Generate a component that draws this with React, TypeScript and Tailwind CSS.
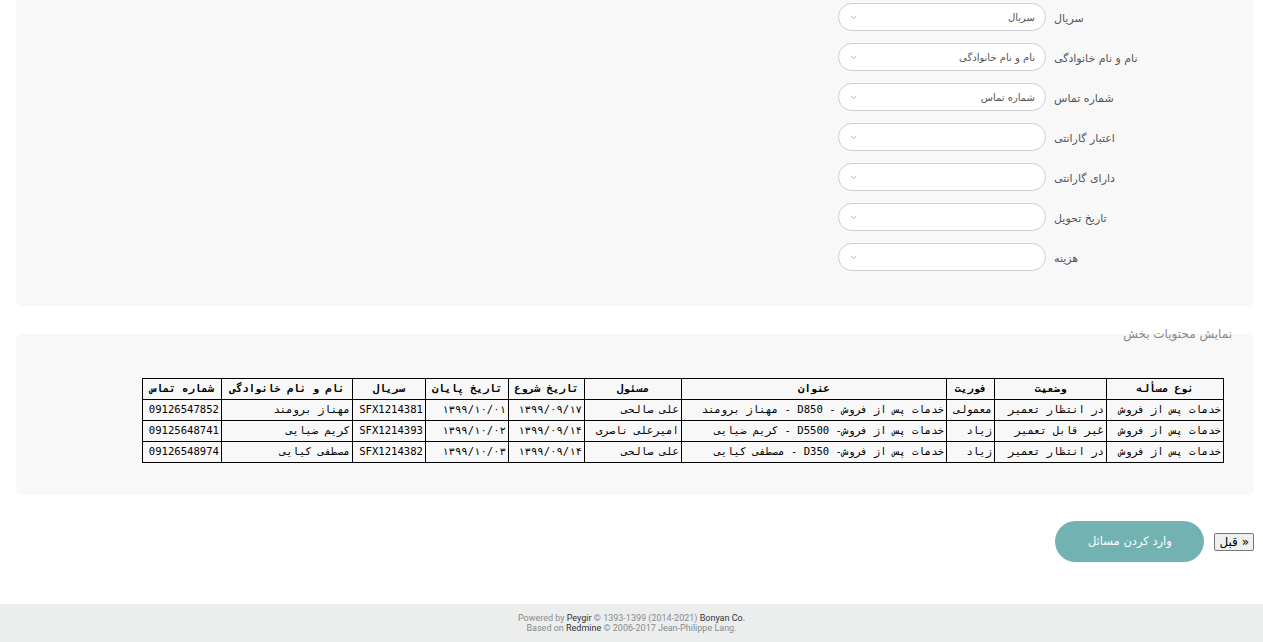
import { ChevronDown } from "lucide-react";

const fields = [
  { label: "سریال", placeholder: "سریال" },
  { label: "نام و نام خانوادگی", placeholder: "نام و نام خانوادگی" },
  { label: "شماره تماس", placeholder: "شماره تماس" },
  { label: "اعتبار گارانتی", placeholder: "" },
  { label: "دارای گارانتی", placeholder: "" },
  { label: "تاریخ تحویل", placeholder: "" },
  { label: "هزینه", placeholder: "" },
];

const headers = [
  { t: "نوع مسأله", w: "w-[117px]" },
  { t: "وضعیت", w: "w-[112px]" },
  { t: "فوریت", w: "w-[48px]" },
  { t: "عنوان", w: "w-[265px]" },
  { t: "مسئول", w: "w-[97px]" },
  { t: "تاریخ شروع", w: "w-[76px]" },
  { t: "تاریخ پایان", w: "w-[83px]" },
  { t: "سریال", w: "w-[73px]" },
  { t: "نام و نام خانوادگی", w: "w-[131px]" },
  { t: "شماره تماس", w: "w-[79px]" },
];

const rows = [
  ["خدمات پس از فروش", "در انتظار تعمیر", "معمولی", "خدمات پس از فروش - D850 - مهناز برومند", "علی صالحی", "۱۳۹۹/۰۹/۱۷", "۱۳۹۹/۱۰/۰۱", "SFX1214381", "مهناز برومند", "09126547852"],
  ["خدمات پس از فروش", "غیر قابل تعمیر", "زیاد", "خدمات پس از فروش- D5500 - کریم ضیایی", "امیرعلی ناصری", "۱۳۹۹/۰۹/۱۴", "۱۳۹۹/۱۰/۰۲", "SFX1214393", "کریم ضیایی", "09125648741"],
  ["خدمات پس از فروش", "در انتظار تعمیر", "زیاد", "خدمات پس از فروش- D350 - مصطفی کیایی", "علی صالحی", "۱۳۹۹/۰۹/۱۴", "۱۳۹۹/۱۰/۰۳", "SFX1214382", "مصطفی کیایی", "09126548974"],
];

const SelectBox = ({ placeholder }: { placeholder: string }) => (
  <div className="w-[208px] h-7 rounded-full border border-[#cfcfcf] bg-white flex items-center justify-between pl-[10px] pr-[10px]">
    <ChevronDown size={9} strokeWidth={2} className="text-[#9a9a9a]" />
    <span dir="rtl" className="text-[10px] text-[#555]">
      {placeholder}
    </span>
  </div>
);

export default function App() {
  return (
    <div className="min-h-[642px] bg-white flex flex-col font-['DejaVu_Sans',sans-serif]">
      <div className="ml-4 mr-[9px] bg-[#f8f8f8] rounded-b-md pt-[3px] pb-[35px] flex flex-col gap-3">
        {fields.map((f) => (
          <div key={f.label} className="flex justify-end items-center gap-2">
            <SelectBox placeholder={f.placeholder} />
            <div className="w-[200px]">
              <span dir="rtl" className="text-[11px] text-[#555]">
                {f.label}
              </span>
            </div>
          </div>
        ))}
      </div>

      <fieldset dir="rtl" className="ml-4 mr-[9px] mt-[21px] bg-[#f8f8f8] rounded-md pr-[22px] pb-[32px]">
        <legend className="text-[12px] text-[#888] leading-[14px]">نمایش محتویات بخش</legend>
        <table className="mt-[37px] mr-2 border-collapse text-[10.6px] text-black font-['DejaVu_Sans_Mono',monospace]">
          <thead>
            <tr>
              {headers.map((h) => (
                <th key={h.t} className={`${h.w} h-[21px] border border-black px-[2px] py-0 text-center font-bold whitespace-nowrap`}>
                  {h.t}
                </th>
              ))}
            </tr>
          </thead>
          <tbody>
            {rows.map((r, i) => (
              <tr key={i}>
                {r.map((c, j) => (
                  <td key={j} className="h-[21px] border border-black px-[2px] py-0 text-right whitespace-nowrap">
                    {c}
                  </td>
                ))}
              </tr>
            ))}
          </tbody>
        </table>
      </fieldset>

      <div className="mt-[26px] mr-[9px] flex justify-end items-center gap-[10px]">
        <button className="w-[149px] h-[41px] rounded-full bg-[#73b2b2] text-white text-[11.5px]">
          وارد کردن مسائل
        </button>
        <button dir="rtl" className="h-[18px] px-1 border border-[#767676] rounded-[2px] bg-[#efefef] text-[12px] text-black leading-none">
          « قبل
        </button>
      </div>

      <div className="mt-[42px] h-[38px] bg-[#eceeee] flex flex-col items-center justify-center text-[9px] leading-[10.5px] text-[#8a8a8a] font-['Roboto',sans-serif]">
        <p>
          Powered by <span className="text-[#333]">Peygir</span> © 1393-1399 (2014-2021) <span className="text-[#333]">Bonyan Co.</span>
        </p>
        <p>
          Based on <span className="text-[#333]">Redmine</span> © 2006-2017 Jean-Philippe Lang.
        </p>
      </div>
    </div>
  );
}
